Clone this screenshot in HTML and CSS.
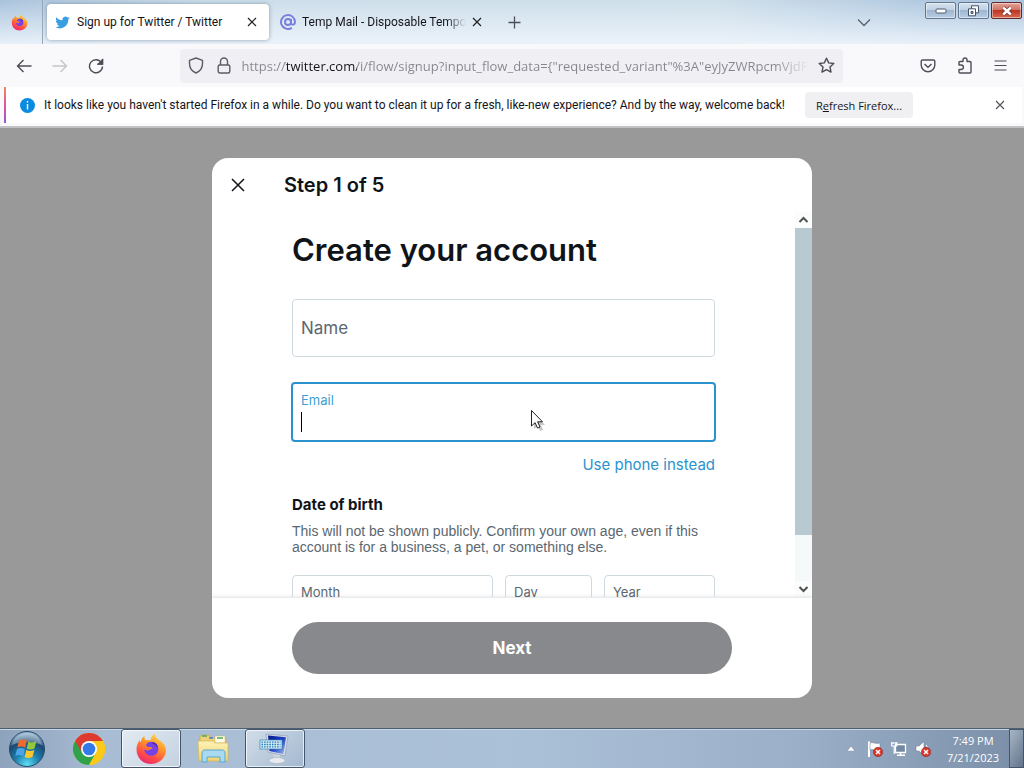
FILE: index.html
```html
<!DOCTYPE html>
<html lang="en">
<head>
<meta charset="utf-8">
<meta name="viewport" content="width=device-width, initial-scale=1">
<title>Sign up for Twitter / Twitter</title>
<link rel="stylesheet" href="styles.css">
</head>
<body>
<svg class="defs" width="0" height="0" aria-hidden="true">
  <defs>
    <linearGradient id="flame" x1="0.8" y1="0" x2="0.3" y2="1"><stop offset="0" stop-color="#ffe04a"/><stop offset="0.4" stop-color="#ff9428"/><stop offset="0.75" stop-color="#ff4a4a"/><stop offset="1" stop-color="#e8276f"/></linearGradient>
    <radialGradient id="orb" cx="0.5" cy="0.95" r="0.9"><stop offset="0" stop-color="#5fe0f4"/><stop offset="0.4" stop-color="#1c7fae"/><stop offset="0.75" stop-color="#1b4a72"/><stop offset="1" stop-color="#8fb2cc"/></radialGradient>
    <linearGradient id="screen" x1="0" y1="0" x2="1" y2="1"><stop offset="0" stop-color="#0a1c8c"/><stop offset="0.5" stop-color="#1b3fc4"/><stop offset="1" stop-color="#a9c6f2"/></linearGradient>
    <linearGradient id="folder" x1="0" y1="0" x2="0" y2="1"><stop offset="0" stop-color="#fdf3b8"/><stop offset="1" stop-color="#f1d271"/></linearGradient>
    <symbol id="firefox" viewBox="0 0 32 32">
      <path d="M16 31C8 31 1.500 25 1.500 16.500c0-4 1.300-7 3.200-9.500.1 1.300.5 2 1 2.600C6 6.500 7.500 4 9.500 3c-.3 1.800.2 3.200 1.200 4.200 1.500-.4 3.300-.3 4.800.2C15.800 4.500 17.500 2 20 1c.2 3 2 4.600 4.300 6.300C28.500 10.200 31 13 31 17.500 30.500 25.500 24 31 16 31z" fill="url(#flame)"/>
      <path d="M11 12c1-2.500 4-3.800 7-3 3.600 1 5.600 4 5.300 7.500-.4 4-3.500 6.500-7.300 6.300-3.700-.2-6.500-2.700-6.800-6.200 1.500.8 3.800 1.200 5.400.2 1-.7 1.800-1.100 3-1.100-.6-1.500-2-1.800-3.300-1.700-1.500.1-2.500-.5-3.300-2z" fill="#7542e5"/>
      <path d="M18 9c3.500 1 5 3.500 4.600 6.500-.5-2.600-2.600-4.500-5.600-5z" fill="#4c2bb3"/>
    </symbol>
    <symbol id="cross" viewBox="0 0 10 10"><path d="M1 1l8 8M9 1L1 9" fill="none" stroke="currentColor" stroke-width="1.200"/></symbol>
    <symbol id="redx" viewBox="0 0 10 10"><circle cx="5" cy="5" r="4.700" fill="#d8352b" stroke="#8f1d18" stroke-width=".5"/><path d="M3 3l4 4M7 3L3 7" stroke="#fff" stroke-width="1.500"/></symbol>
  </defs>
</svg>

<header class="titlebar">
  <div class="pinned"><svg width="17" height="17"><use href="#firefox"/></svg></div>
  <div class="tabs">
    <div class="tab tab-active">
      <svg width="15" height="15" viewBox="0 0 24 24"><path fill="#3a9fe2" d="M23.600 4.900c-.85.380-1.770.64-2.700.75.980-.6 1.730-1.520 2.080-2.620-.92.540-1.930.94-3 1.150A4.750 4.750 0 0 0 11.900 8.500C8 8.300 4.500 6.400 2.100 3.500c-1.270 2.200-.65 5 1.470 6.350-.77-.03-1.500-.25-2.150-.6v.06c0 2.300 1.620 4.200 3.800 4.650-.7.190-1.440.2-2.150.08.6 1.900 2.360 3.250 4.430 3.300A9.500 9.500 0 0 1 .5 19.300a13.400 13.400 0 0 0 7.280 2.130c8.800 0 13.900-7.430 13.500-14.100.93-.67 1.730-1.500 2.320-2.430z"/></svg>
      <span class="tab-title">Sign up for Twitter / Twitter</span>
      <button class="icon-btn" aria-label="Close tab"><svg width="10" height="10"><use href="#cross"/></svg></button>
    </div>
    <div class="tab">
      <svg width="16" height="16" viewBox="0 0 16 16" fill="none" stroke="#7a7de0" stroke-width="1.900"><circle cx="8" cy="8" r="3"/><path d="M11 5v4c0 2.300 4 2.300 4-1a7 7 0 1 0-3.200 5.900"/></svg>
      <span class="tab-title tab-fade">Temp Mail - Disposable Temporary Email</span>
      <button class="icon-btn" aria-label="Close tab"><svg width="10" height="10"><use href="#cross"/></svg></button>
    </div>
    <button class="icon-btn new-tab" aria-label="New tab"><svg width="13" height="13" viewBox="0 0 13 13" stroke="#4a4f58" stroke-width="1.300"><path d="M6.500 0.500v12M.5 6.500h12"/></svg></button>
  </div>
  <button class="icon-btn list-tabs" aria-label="List all tabs"><svg width="14" height="9" viewBox="0 0 14 9" fill="none" stroke="#5a626c" stroke-width="1.300"><path d="M1 1.500l6 6 6-6"/></svg></button>
  <div class="window-controls">
    <button class="win-btn" aria-label="Minimize"><svg width="12" height="6" viewBox="0 0 12 6"><rect x="1" y="1" width="10" height="4" rx="1" fill="#fff" stroke="#4a5a72"/></svg></button>
    <button class="win-btn" aria-label="Restore"><svg width="13" height="12" viewBox="0 0 13 12" fill="#fff" stroke="#43536c"><path d="M4.500.8h7v7h-7z"/><path d="M1.500 3.800h7v7h-7z"/><path d="M4 6.500h2v2H4z" fill="#9fb6d0"/></svg></button>
    <button class="win-btn win-close" aria-label="Close window"><svg width="12" height="10" viewBox="0 0 12 10"><path d="M2.200 1.500l7.600 7M9.800 1.500l-7.600 7" stroke="#6d2a24" stroke-width="4"/><path d="M2.200 1.500l7.600 7M9.800 1.500l-7.600 7" stroke="#fff" stroke-width="2.600"/></svg></button>
  </div>
</header>

<nav class="toolbar" aria-label="Navigation">
  <div class="nav-buttons">
    <button class="icon-btn" aria-label="Back"><svg width="16" height="14" viewBox="0 0 16 14" fill="none" stroke="#4d4d56" stroke-width="1.400"><path d="M15.500 7H1.500M7.500 1l-6 6 6 6"/></svg></button>
    <button class="icon-btn" aria-label="Forward" disabled><svg width="16" height="14" viewBox="0 0 16 14" fill="none" stroke="#c4c4ca" stroke-width="1.400"><path d="M.5 7h14M8.500 1l6 6-6 6"/></svg></button>
    <button class="icon-btn" aria-label="Reload"><svg width="16" height="16" viewBox="0 0 16 16" fill="none" stroke="#4d4d56" stroke-width="1.400"><path d="M13.500 4.800A6.500 6.500 0 1 0 14.500 8.500M14.500 1v5h-5"/><path d="M14.500 2v4h-4z" fill="#4d4d56"/></svg></button>
  </div>
  <div class="urlbar">
    <svg width="16" height="17" viewBox="0 0 16 17" fill="none" stroke="#5c5c66" stroke-width="1.400"><path d="M8 1l6.500 2.300v3.200c0 4.200-2.500 7.800-6.500 9.500-4-1.700-6.500-5.300-6.500-9.500V3.300z" stroke-linejoin="round"/></svg>
    <svg width="14" height="17" viewBox="0 0 14 17" fill="none" stroke="#5c5c66" stroke-width="1.400"><rect x="1.200" y="8" width="11.600" height="8" rx="1.500"/><path d="M3.500 8V4.500a3.500 3.500 0 0 1 7 0V8"/></svg>
    <input class="url" type="text" aria-label="Address" value='https://twitter.com/i/flow/signup?input_flow_data={"requested_variant"%3A"eyJyZWRpcmVjdF9hZnRlcl9sb2dpbiI' >
    <button class="icon-btn" aria-label="Bookmark this page"><svg width="17" height="17" viewBox="0 0 17 17" fill="none" stroke="#4d4d56" stroke-width="1.400" stroke-linejoin="round"><path d="M8.500 1.200l2.200 4.700 5.100.6-3.800 3.500 1 5.100-4.500-2.500L4 15.100l1-5.100L1.200 6.500l5.100-.6z"/></svg></button>
  </div>
  <div class="tool-buttons">
    <button class="icon-btn" aria-label="Save to Pocket"><svg width="16" height="14" viewBox="0 0 16 14" fill="none" stroke="#4d4d56" stroke-width="1.400"><path d="M2.500 1h11c.8 0 1.300.5 1.300 1.300V6a6.800 6.800 0 0 1-13.600 0V2.300C1.200 1.500 1.700 1 2.500 1z"/><path d="M4.500 5L8 8.300 11.500 5"/></svg></button>
    <button class="icon-btn" aria-label="Extensions"><svg width="16" height="17" viewBox="0 0 16 17" fill="none" stroke="#4d4d56" stroke-width="1.400" stroke-linejoin="round"><path d="M2 8V5.500c0-.6.400-1 1-1h3V3a2 2 0 0 1 4 0v1.500h3c.6 0 1 .4 1 1V15c0 .6-.4 1-1 1H3c-.6 0-1-.4-1-1v-2.500h2.200a2.200 2.200 0 0 0 0-4.500z"/></svg></button>
    <button class="icon-btn" aria-label="Menu"><svg width="13" height="11" viewBox="0 0 13 11" stroke="#4d4d56" stroke-width="1.200"><path d="M.5 1h12M.5 5.500h12M.5 10h12"/></svg></button>
  </div>
</nav>

<aside class="notice">
  <div class="notice-bar">
    <svg width="15" height="15" viewBox="0 0 15 15"><circle cx="7.500" cy="7.500" r="7.500" fill="#0a8be0"/><path d="M7.500 3v1.600M7.500 6v5.500" stroke="#fff" stroke-width="1.400"/></svg>
    <span class="notice-text">It looks like you haven't started Firefox in a while. Do you want to clean it up for a fresh, like-new experience? And by the way, welcome back!</span>
    <button class="refresh">R<u>e</u>fresh Firefox...</button>
    <button class="icon-btn notice-close" aria-label="Dismiss"><svg width="10" height="10"><use href="#cross"/></svg></button>
  </div>
</aside>

<main class="page">
  <section class="modal" role="dialog" aria-labelledby="step">
    <div class="modal-head">
      <button class="icon-btn" aria-label="Close"><svg width="14" height="14" viewBox="0 0 14 14" stroke="#0f1419" stroke-width="1.500"><path d="M1 1l12 12M13 1L1 13"/></svg></button>
      <h2 class="step" id="step">Step 1 of 5</h2>
    </div>
    <div class="modal-body">
      <form class="form">
        <h1 class="heading">Create your account</h1>
        <div class="field name-field">
          <label class="name-label" for="name">Name</label>
          <input class="field-input name-input" id="name" type="text">
        </div>
        <div class="field field-focus">
          <label class="small-label" for="email">Email</label>
          <input class="field-input" id="email" type="email">
          <span class="caret"></span>
          <svg class="pointer" width="16" height="22" viewBox="0 0 16 22"><path d="M4 4v16l4-3 2 5 3-1-2-5h4z" fill="#000" opacity=".22"/><path d="M1.500 1.500v15.500l3.600-3.300 2.400 5.400 2.500-1.100-2.400-5.200h4.900z" fill="#fff" stroke="#222" stroke-width="1"/></svg>
        </div>
        <a class="switch-link" href="#phone">Use phone instead</a>
        <h3 class="dob-title">Date of birth</h3>
        <p class="dob-text">This will not be shown publicly. Confirm your own age, even if this account is for a business, a pet, or something else.</p>
        <div class="dob-row">
          <div class="field"><label class="small-label" for="month">Month</label><select class="field-input" id="month"><option></option></select></div>
          <div class="field"><label class="small-label" for="day">Day</label><select class="field-input" id="day"><option></option></select></div>
          <div class="field"><label class="small-label" for="year">Year</label><select class="field-input" id="year"><option></option></select></div>
        </div>
      </form>
      <div class="scrollbar" aria-hidden="true">
        <svg class="arrow" width="17" height="16" viewBox="0 0 17 16" fill="none" stroke="#505050" stroke-width="2"><path d="M4.500 10l4-4 4 4"/></svg>
        <div class="track"><div class="thumb"></div></div>
        <svg class="arrow" width="17" height="16" viewBox="0 0 17 16" fill="none" stroke="#505050" stroke-width="2"><path d="M4.500 6l4 4 4-4"/></svg>
      </div>
    </div>
    <div class="modal-foot"><button class="next">Next</button></div>
  </section>
</main>

<footer class="taskbar">
  <button class="start" aria-label="Start"><svg width="38" height="38" viewBox="0 0 38 38"><circle cx="19" cy="19" r="17.500" fill="url(#orb)" stroke="#27496a"/><path d="M4 15C6 7 12 3 19 3s13 4 15 12c-9-4-21-4-30 0z" fill="#fff" opacity=".3"/><path d="M11 10.500c3-1.500 5.500-1.300 7.800.2l-1.600 7c-2.400-1.400-4.800-1.500-7.800-.1z" fill="#ef6a2c"/><path d="M20.300 11.500c2.500 1.300 5.200 1.200 8-.2l-1.800 7.200c-2.600 1.200-5.300 1.200-7.800-.1z" fill="#93c83e"/><path d="M9 19c3-1.400 5.500-1.200 7.900.2l-1.700 7c-2.400-1.500-4.900-1.500-7.900-.1z" fill="#4ba6e8"/><path d="M18.300 20c2.500 1.300 5.200 1.200 8-.1l-1.900 7.200c-2.700 1.300-5.300 1.200-7.800-.1z" fill="#fbc92f"/></svg></button>
  <div class="apps">
    <button class="app" aria-label="Chrome"><svg width="32" height="32" viewBox="0 0 32 32"><circle cx="16" cy="16" r="16" fill="#fbc918"/><path d="M16 16L2.140 8A16 16 0 0 0 16 32l6.930-12z" fill="#30a24c"/><path d="M2.140 8A16 16 0 0 1 29.860 8H16v8l-6.900 4z" fill="#de3b30"/><path d="M29.860 8A16 16 0 0 1 16 32l6.930-12L22 8z" fill="#fbc918"/><circle cx="16" cy="16" r="8" fill="#fff"/><circle cx="16" cy="16" r="6.300" fill="#3479e8"/></svg></button>
    <button class="app app-open" aria-label="Firefox"><svg width="32" height="32"><use href="#firefox"/></svg></button>
    <button class="app" aria-label="Explorer"><svg width="32" height="30" viewBox="0 0 32 30"><path d="M3 3l1-2h8l2 3h15v22H3z" fill="#eed277" stroke="#c9a64b" stroke-width=".7"/><path d="M18 2h10v7H18z" fill="#fffbe7" stroke="#c9b26b" stroke-width=".5"/><path d="M5 2h5M20 4h6" stroke="#57a55a" stroke-width="1.500"/><path d="M12 4h4" stroke="#4a7fc4" stroke-width="1.500"/><path d="M1 7h15l2 2h13v18H2z" fill="url(#folder)" stroke="#d2b458" stroke-width=".7"/><path d="M5 28v-9c0-2 1-3 3-3h17c2 0 3 1 3 3v9h-5v-5H10v5z" fill="#a9daf1" stroke="#5aa7cf"/></svg></button>
    <button class="app app-open" aria-label="On-screen keyboard"><svg width="32" height="32" viewBox="0 0 32 32"><path d="M7 1l22 2-3 20L9 19z" fill="#d6dde8" stroke="#8b97ab" stroke-width=".6"/><path d="M9 2.500l18 1.700-2.600 17L10.500 18z" fill="url(#screen)"/><path d="M14 21l7 1v4h-6z" fill="#cfd4dc"/><ellipse cx="18" cy="27.500" rx="8" ry="3" fill="#e8ebef" stroke="#a3abb8" stroke-width=".5"/><rect x="1" y="7" width="22" height="9" fill="#d7eef8" stroke="#3c7fae" stroke-width=".7"/><path d="M2.500 9.200h19M2.500 11.500h19M2.500 13.800h19" stroke="#207eb5" stroke-width="1.300" stroke-dasharray="1.600 1"/></svg></button>
  </div>
  <div class="tray">
    <svg width="8" height="5" viewBox="0 0 8 5"><path d="M0 5l4-5 4 5z" fill="#fff" stroke="#5c6f88" stroke-width=".4"/></svg>
    <svg class="tray-first" width="16" height="16" viewBox="0 0 16 16"><path d="M1 .5h2V16H1z" fill="#fff"/><path d="M3 2c3-1.500 5 1.500 10 0v7C8 10.500 6 7.500 3 9z" fill="#fff" stroke="#65758a" stroke-width=".5"/><svg x="6" y="6" width="10" height="10"><use href="#redx"/></svg></svg>
    <svg width="16" height="16" viewBox="0 0 16 16"><path d="M4.500 3.500h10v8h-10z" fill="#7389a3" stroke="#fff" stroke-width="1.300"/><path d="M6 14.300h8M9.500 12v2" stroke="#fff" stroke-width="1.400"/><path d="M.7 1v4h5V1M2.200 1v2M4.200 1v2M3.200 5v8" fill="none" stroke="#fff" stroke-width="1.200"/></svg>
    <svg width="17" height="16" viewBox="0 0 17 16"><path d="M1 5h3l5-4.500v14L4 10H1z" fill="#fff" stroke="#60718a" stroke-width=".5"/><path d="M11 4c1 1 1.500 2 1.500 4" stroke="#fff" fill="none"/><svg x="6" y="6" width="10" height="10"><use href="#redx"/></svg></svg>
    <time class="clock" datetime="2023-07-21T19:49"><span>7:49 PM</span><span>7/21/2023</span></time>
  </div>
  <button class="show-desktop" aria-label="Show desktop"></button>
</footer>
</body>
</html>
```
FILE: styles.css
```css
* { box-sizing: border-box; }

body {
  margin: 0;
  height: 100vh;
  display: flex;
  flex-direction: column;
  font-family: "Open Sans", "Noto Sans", sans-serif;
  font-size: 11px;
  color: #15141a;
  overflow: hidden;
}

button, input, select { font: inherit; color: inherit; }
svg { flex: none; display: block; }
.defs { position: absolute; }

.icon-btn {
  flex: none;
  display: flex;
  align-items: center;
  justify-content: center;
  padding: 0;
  border: 0;
  background: none;
}

/* Title bar and tabs */
.titlebar {
  flex: none;
  height: 44px;
  display: flex;
  align-items: center;
  background: linear-gradient(rgba(255, 255, 255, 0), rgba(238, 245, 252, .9)),
    linear-gradient(90deg, #a9c3dc, #cddeea 20%, #cfdfea 70%, #b1c9e0 90%, #a9c2dc);
}
.pinned {
  width: 43px;
  height: 44px;
  padding-left: 11px;
  display: flex;
  align-items: center;
  border-right: 1px solid #98a9ba;
}
.tabs { flex: 1; min-width: 0; display: flex; align-items: center; padding-left: 4px; }
.tab {
  width: 222px;
  height: 36px;
  padding: 0 12px 0 8px;
  display: flex;
  align-items: center;
  gap: 7px;
  border-radius: 4px;
}
.tab + .tab { padding: 0 9px 0 11px; gap: 6px; margin-right: 17px; }
.tab-active { background: #fff; box-shadow: 0 0 4px rgba(60, 80, 110, .5); }
.tab-title, .notice-text { font-family: Roboto, "Noto Sans", sans-serif; font-size: 12px; white-space: nowrap; }
.tab-title { flex: 1; min-width: 0; overflow: hidden; }
.tab-fade { mask-image: linear-gradient(90deg, #000 88%, transparent); }
.tab .tab-title + .icon-btn { color: #222; }
.list-tabs { margin-right: 54px; }
.window-controls { display: flex; gap: 2px; align-self: flex-start; padding: 2px 2px 0 0; }
.win-btn {
  width: 31px;
  height: 17px;
  padding: 0;
  display: flex;
  align-items: center;
  justify-content: center;
  border: 1px solid #61758f;
  border-radius: 2px;
  background: linear-gradient(#d5e2ef, #bfd0e3 48%, #9fb6d0 50%, #b9cee3);
  box-shadow: inset 0 0 0 1px rgba(255, 255, 255, .45);
}
.win-close {
  border-color: #5e2a2c;
  background: linear-gradient(#e4a397, #d07060 48%, #bd3524 50%, #d66a50);
}

/* Toolbar */
.toolbar {
  flex: none;
  height: 43px;
  display: flex;
  align-items: center;
  justify-content: space-between;
  padding: 0 17px 0 16px;
  background: #f9f9fb;
}
.nav-buttons { display: flex; gap: 20px; }
.urlbar {
  width: 663px;
  height: 34px;
  margin-left: 58px;
  padding: 0 8px;
  display: flex;
  align-items: center;
  gap: 13px;
  border-radius: 4px;
  background: #f0f0f4;
}
.url {
  flex: 1;
  min-width: 0;
  height: 26px;
  margin: 0 -4px 0 -2px;
  padding: 0;
  border: 0;
  font-size: 13px;
  color: transparent;
  background: linear-gradient(90deg, #85858c 43px, #15141a 43px, #15141a 115px, #85858c 115px, #85858c 94%, #f0f0f4);
  background-clip: text;
  -webkit-background-clip: text;
}
.tool-buttons { display: flex; align-items: center; gap: 21px; margin-left: 60px; }

/* Notification */
.notice { flex: none; height: 41px; padding: 0 2px 2px 4px; background: #f9f9fb; border-bottom: 2px solid #c2c2c4; }
.notice-bar {
  height: 36px;
  padding: 0 17px 0 14px;
  display: flex;
  align-items: center;
  border-left: 2px solid;
  border-image: linear-gradient(#f38a5c, #e0559a, #9059d8) 1;
  background: #fff;
}
.notice-text { margin: 0 20px 0 9px; }
.refresh {
  height: 26px;
  padding: 0 11px;
  border: 0;
  border-radius: 4px;
  background: #f0f0f3;
  white-space: nowrap;
}
.notice-close { margin-left: auto; color: #55555e; }

/* Page and dialog */
.page {
  flex: 1;
  min-height: 0;
  display: flex;
  align-items: center;
  justify-content: center;
  background: #999;
  font-family: Inter, "Liberation Sans", sans-serif;
}
.modal {
  width: 600px;
  max-width: 100%;
  height: 90%;
  display: flex;
  flex-direction: column;
  overflow: hidden;
  border-radius: 16px;
  background: #fff;
  color: #0f1419;
}
.modal-head { flex: none; height: 54px; padding-left: 19px; display: flex; align-items: center; gap: 39px; }
.step { margin: 0; font-size: 20px; line-height: 24px; font-weight: 600; }
.modal-body { flex: 1; min-height: 0; display: flex; overflow: hidden; }
.form { flex: 1; min-width: 0; padding: 20px 80px 0; display: flex; flex-direction: column; }
.heading { margin: 0 0 31px; font-size: 31px; line-height: 36px; font-weight: 600; white-space: nowrap; }
.field {
  position: relative;
  flex: none;
  min-width: 0;
  height: 58px;
  border: 1px solid #cfd9de;
  border-radius: 4px;
  display: flex;
  flex-direction: column;
  padding: 7px 8px;
  color: #5b6770;
}
.field-input { width: 100%; min-height: 0; flex: 1; padding: 0; border: 0; outline: 0; background: none; appearance: none; }
.name-field { flex-direction: row; align-items: center; gap: 8px; margin-bottom: 25px; }
.name-label { font-size: 17px; }
.name-input { width: auto; align-self: stretch; }
.small-label { font-size: 13px; line-height: 18px; }
.field-focus { height: 60px; margin: 0 -1px; border: 2px solid #2a93cd; color: #3d9fd3; }
.caret { position: absolute; left: 8px; top: 28px; width: 1px; height: 20px; background: #000; }
.pointer { position: absolute; left: 237px; top: 25px; }
.switch-link { align-self: flex-end; margin: 13px 0 20px; font-size: 15px; line-height: 20px; color: #2a93cd; text-decoration: none; }
.dob-title { margin: 0 0 8px; font-size: 15px; line-height: 20px; font-weight: 700; }
.dob-text { margin: 0 0 20px; font-family: "Liberation Sans", sans-serif; font-size: 14px; line-height: 16px; color: #5b6770; }
.dob-row { display: grid; grid-template-columns: 201fr 87fr 111fr; gap: 12px; }
.scrollbar { flex: none; width: 17px; display: flex; flex-direction: column; background: #f6f9f9; }
.arrow { background: #fbfdfd; }
.track { flex: 1; }
.thumb { height: 87%; background: #b9c9d1; }
.modal-foot { flex: none; padding: 24px 80px; border-top: 1px solid #e8eaeb; box-shadow: 0 0 4px rgba(0, 0, 0, .12); }
.next { width: 100%; height: 52px; border: 0; border-radius: 26px; background: #87898c; color: #fff; font-size: 17px; font-weight: 700; }

/* Taskbar */
.taskbar {
  flex: none;
  height: 40px;
  display: flex;
  align-items: center;
  border-top: 1px solid #4d5f73;
  box-shadow: inset 0 1px 0 #c8d6e4;
  background: linear-gradient(90deg, #8da2bb, #a8bdd4 10%, #abc1d8 50%, #9bb0c8 78%, #7a8ea8);
}
.start { width: 38px; height: 38px; margin: 0 13px 0 8px; padding: 0; border: 0; background: none; }
.apps { display: flex; gap: 2px; align-self: stretch; }
.app {
  width: 60px;
  padding: 0;
  display: flex;
  align-items: center;
  justify-content: center;
  border: 1px solid transparent;
  border-radius: 3px;
  background: none;
}
.app-open {
  border-color: #45566b;
  background: linear-gradient(135deg, #e3ebf3, #c3d1e0);
  box-shadow: inset 0 0 0 1px rgba(255, 255, 255, .7);
}
.app-open:last-child { background: linear-gradient(135deg, #d2dde9, #a3b8d0); }
.tray { margin-left: auto; display: flex; align-items: center; gap: 8px; }
.tray-first { margin-left: 4px; }
.clock { width: 66px; display: flex; flex-direction: column; align-items: center; line-height: 17px; color: #fff; }
.show-desktop {
  width: 15px;
  align-self: stretch;
  margin-left: 3px;
  padding: 0;
  border: 1px solid #45566b;
  background: linear-gradient(120deg, #a8b5c5, #62748b);
}
```
